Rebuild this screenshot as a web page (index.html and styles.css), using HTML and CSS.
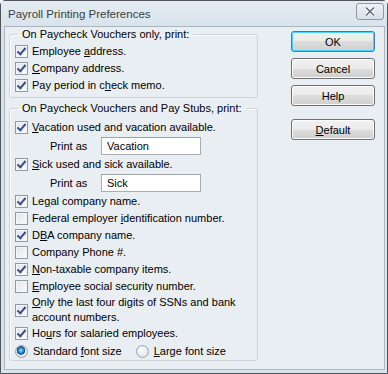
FILE: index.html
```html
<!DOCTYPE html>
<html lang="en">
<head>
  <meta charset="UTF-8" />
  <title>Payroll Printing Preferences</title>
  <link rel="stylesheet" href="styles.css">
</head>
<body>
  <div class="window">
    <div class="titlebar">
      <span class="title">Payroll Printing Preferences</span>
      <span class="close">
        <svg width="18" height="11" viewBox="0 0 18 11"><path d="M5 1.5 L13 9.5 M13 1.5 L5 9.5" stroke="#fff" stroke-width="3.4" /><path d="M5 1.5 L13 9.5 M13 1.5 L5 9.5" stroke="#5f6b78" stroke-width="1.6" /></svg>
      </span>
    </div>

    <div class="client">
      <div class="groups">
        <fieldset class="group first">
          <legend>On Paycheck Vouchers only, print:</legend>
          <div class="row"><span class="box on"></span><span>Employee <u>a</u>ddress.</span></div>
          <div class="row"><span class="box on"></span><span><u>C</u>ompany address.</span></div>
          <div class="row"><span class="box on"></span><span>Pay period in c<u>h</u>eck memo.</span></div>
        </fieldset>

        <fieldset class="group second">
          <legend>On Paycheck Vouchers and Pay Stubs, print:</legend>
          <div class="row"><span class="box on"></span><span><u>V</u>acation used and vacation available.</span></div>
          <div class="print-as"><span class="pa-label">Print as</span><span class="field">Vacation</span></div>
          <div class="row"><span class="box on"></span><span><u>S</u>ick used and sick available.</span></div>
          <div class="print-as"><span class="pa-label">Print as</span><span class="field">Sick</span></div>
          <div class="row"><span class="box on"></span><span>Le<u>g</u>al company name.</span></div>
          <div class="row"><span class="box"></span><span>Federal employer <u>i</u>dentification number.</span></div>
          <div class="row"><span class="box on"></span><span>D<u>B</u>A company name.</span></div>
          <div class="row"><span class="box"></span><span>Company Phone #.</span></div>
          <div class="row"><span class="box on"></span><span><u>N</u>on-taxable company items.</span></div>
          <div class="row"><span class="box"></span><span><u>E</u>mployee social security number.</span></div>
          <div class="row two"><span class="box on"></span><span><u>O</u>nly the last four digits of SSNs and bank<br>account numbers.</span></div>
          <div class="row"><span class="box on"></span><span>Ho<u>u</u>rs for salaried employees.</span></div>
          <div class="row radios">
            <span class="radio on"></span><span>Standard <u>f</u>ont size</span>
            <span class="radio gap"></span><span><u>L</u>arge font size</span>
          </div>
        </fieldset>
      </div>

      <div class="buttons">
        <button class="btn default-btn">OK</button>
        <button class="btn">Cancel</button>
        <button class="btn">Help</button>
        <button class="btn spaced"><u>D</u>efault</button>
      </div>
    </div>
  </div>
</body>
</html>
```

FILE: styles.css
```css
* {
  margin: 0;
  padding: 0;
  box-sizing: border-box;
}
body {
  width: 388px;
  height: 374px;
  overflow: hidden;
  font-family: 'Liberation Sans', Arial, sans-serif;
  font-size: 11px;
  color: #000;
  background: #fff;
}
.window {
  width: 388px;
  height: 374px;
  border: 1px solid #4f5458;
  border-radius: 5px 5px 0 0;
  background: #dbe4ec;
  display: flex;
  flex-direction: column;
}
.titlebar {
  flex: none;
  height: 25px;
  display: flex;
  align-items: center;
  justify-content: space-between;
  padding: 0 3px 0 7px;
  background: linear-gradient(#e4ebf2, #d9e3ec);
}
.title {
  font-size: 11.5px;
  color: #3a3f44;
  margin-top: 1px;
}
.close {
  width: 28px;
  height: 17px;
  margin-top: -4px;
  border: 1px solid #8d99a6;
  border-radius: 3px;
  background: linear-gradient(#eef2f6, #d7dfe7);
  display: flex;
  align-items: center;
  justify-content: center;
}
.client {
  flex: 1;
  min-height: 0;
  margin: 0 2px 3px 3px;
  border: 1px solid #aab6c2;
  background: #e9eef2;
  display: flex;
  padding: 0 0 0 4px;
}
.groups {
  width: 249px;
}
.group {
  border: 1px solid #cdd5dc;
  border-radius: 3px;
  box-shadow: inset 1px 1px 0 #fafcfd;
  padding: 2px 0 3px 5px;
}
.group legend {
  margin-left: 3px;
  padding: 0 4px 0 4px;
  line-height: 14px;
}
.group.second {
  margin-top: 3px;
  padding-top: 4px;
  padding-bottom: 0;
}
.row {
  display: flex;
  align-items: center;
  height: 17px;
  line-height: 17px;
}
.row.two {
  height: 30px;
  line-height: 15px;
}
.box {
  width: 13px;
  height: 13px;
  flex: none;
  margin-right: 4px;
  border: 1px solid #8e9aa6;
  background: linear-gradient(135deg, #dfe3e8, #fbfcfd);
  box-shadow: inset 0 0 0 1px #f4f6f8;
  position: relative;
}
.box.on::after {
  content: "";
  position: absolute;
  left: 3px;
  top: 0px;
  width: 3px;
  height: 7px;
  border: solid #3a4f8f;
  border-width: 0 2px 2px 0;
  transform: rotate(40deg);
}
.print-as {
  display: flex;
  align-items: center;
  height: 19px;
  margin-bottom: 1px;
}
.pa-label {
  width: 86px;
  padding-left: 35px;
}
.field {
  width: 100px;
  height: 18px;
  line-height: 16px;
  padding-left: 5px;
  background: #fff;
  border: 1px solid #abadb3;
  border-top-color: #9ba3ad;
}
.radios {
  margin-top: 1px;
}
.radio {
  width: 13px;
  height: 13px;
  flex: none;
  margin-right: 5px;
  border-radius: 50%;
  border: 1px solid #9aa3ac;
  background: radial-gradient(circle at 40% 40%, #fdfdfd, #d6dbe0);
}
.radio.on {
  background: radial-gradient(circle at 45% 40%, #9fe1ff 0, #2a8ad0 2.5px, #0e4f8a 4px, #e8ecf0 4.6px, #d2d8de 100%);
}
.radio.gap {
  margin-left: 14px;
}
.buttons {
  display: flex;
  flex-direction: column;
  margin-left: 33px;
  padding-top: 4px;
}
.btn {
  width: 84px;
  height: 21px;
  margin-bottom: 6px;
  font-family: 'Liberation Sans', Arial, sans-serif;
  font-size: 11px;
  color: #000;
  border: 1px solid #707070;
  border-radius: 3px;
  background: linear-gradient(#f2f2f2 0, #ebebeb 50%, #dddddd 50%, #cfcfcf 100%);
  box-shadow: inset 0 0 0 1px #fbfbfb;
}
.default-btn {
  border-color: #3c7fb1;
  box-shadow: inset 0 0 0 1px #48d5fe;
}
.spaced {
  margin-top: 7px;
}
```
